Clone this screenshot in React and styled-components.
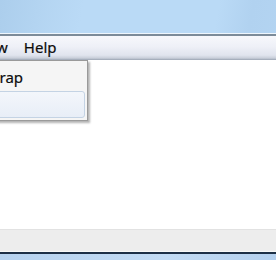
import React from "react";
import styled, { createGlobalStyle } from "styled-components";

const Global = createGlobalStyle`
  html, body { margin: 0; padding: 0; overflow: hidden; }
  body { width: 276px; height: 260px; font-family: "Noto Sans", "Open Sans", sans-serif; }
  #root { height: 100%; }
`;

const Window = styled.div`
  position: relative;
  display: flex;
  flex-direction: column;
  width: 276px;
  height: 260px;
  overflow: hidden;
`;

const TitleArea = styled.div`
  height: 33px;
  flex: none;
  background:
    linear-gradient(100deg, rgba(160,196,228,0.55) 0%, rgba(170,204,234,0.3) 18%, rgba(190,220,248,0) 30%, rgba(190,220,248,0) 78%, rgba(168,202,234,0.5) 90%, rgba(168,202,234,0.4) 100%),
    #badaf6;
  border-bottom: 1px solid #eef6fd;
`;

const MenuBar = styled.div`
  height: 26px;
  flex: none;
  display: flex;
  align-items: center;
  border-top: 2px solid #7c8b99;
  background: linear-gradient(#f7f8fc 0%, #eef0f7 45%, #e0e4ee 80%, #c9cfda 92%, #9aa3b2 100%);
  box-sizing: border-box;
  padding-bottom: 3px;
`;

const MenuRow = styled.div`
  display: flex;
  margin-left: -33px;
`;

const MenuItem = styled.span`
  font-size: 15px;
  color: #0c0c0c;
  padding: 0 8px;
  line-height: 20px;
  -webkit-text-stroke: 0.2px #0c0c0c;
`;

const Content = styled.div`
  flex: 1;
  background: #ffffff;
`;

const StatusBar = styled.div`
  height: 21px;
  flex: none;
  background: #ededed;
  border-top: 1px solid #e2e2e2;
  border-bottom: 1px solid #f7f8f7;
`;

const BottomEdge = styled.div`
  height: 8px;
  flex: none;
  box-sizing: border-box;
  border-top: 2px solid #1c2f46;
  background: linear-gradient(90deg, #b6d2ef, #c2dbf4 60%, #b4d0ee);
`;

const Dropdown = styled.div`
  position: absolute;
  top: 60px;
  left: -110px;
  width: 198px;
  height: 61px;
  box-sizing: border-box;
  background: #f5f5f5;
  border: 1px solid #9a9a9a;
  box-shadow: 2px 2px 2px rgba(0,0,0,0.3);
  padding: 2px;
  display: flex;
  flex-direction: column;
  gap: 1px;
`;

const DropItem = styled.div`
  height: 27px;
  box-sizing: border-box;
  font-size: 15px;
  color: #0c0c0c;
  -webkit-text-stroke: 0.2px #0c0c0c;
  padding-left: 50px;
  display: flex;
  align-items: center;
  border-radius: 3px;
  border: 1px solid ${p => (p.$active ? "#c4d3e4" : "transparent")};
  background: ${p => (p.$active ? "linear-gradient(#f3f6fb, #e8eef7)" : "transparent")};
`;

export default function App() {
  return (
    <>
      <Global />
      <Window>
        <TitleArea />
        <MenuBar>
          <MenuRow>
            <MenuItem>View</MenuItem>
            <MenuItem>Help</MenuItem>
          </MenuRow>
        </MenuBar>
        <Content />
        <StatusBar />
        <BottomEdge />
        <Dropdown>
          <DropItem>Word Wrap</DropItem>
          <DropItem $active>Font...</DropItem>
        </Dropdown>
      </Window>
    </>
  );
}
